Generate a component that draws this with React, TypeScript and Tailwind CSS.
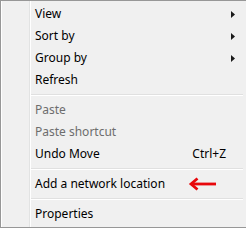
type Item =
  | { kind: 'item'; label: string; submenu?: boolean; disabled?: boolean; shortcut?: string; mark?: boolean }
  | { kind: 'sep' };

const items: Item[] = [
  { kind: 'item', label: 'View', submenu: true },
  { kind: 'item', label: 'Sort by', submenu: true },
  { kind: 'item', label: 'Group by', submenu: true },
  { kind: 'item', label: 'Refresh' },
  { kind: 'sep' },
  { kind: 'item', label: 'Paste', disabled: true },
  { kind: 'item', label: 'Paste shortcut', disabled: true },
  { kind: 'item', label: 'Undo Move', shortcut: 'Ctrl+Z' },
  { kind: 'sep' },
  { kind: 'item', label: 'Add a network location', mark: true },
  { kind: 'sep' },
  { kind: 'item', label: 'Properties' },
];

// red annotation arrow pointing at the item
function RedArrow() {
  return (
    <svg width="30" height="14" viewBox="0 0 30 14" className="absolute left-[157px] top-[4px]">
      <path d="M28 7H4" stroke="#e8070b" strokeWidth="2.8" />
      <path d="M9.5 1.5L3 7L9.5 12.5" stroke="#e8070b" strokeWidth="2.8" fill="none" />
    </svg>
  );
}

export default function App() {
  return (
    <div
      className="w-[246px] h-[228px] bg-[#f0f0f0] border-t border-b border-l border-[#979797] flex text-[12px] text-black overflow-hidden"
      style={{ fontFamily: '"Noto Sans", "Open Sans", sans-serif' }}
    >
      <div className="w-[29px] shrink-0 border-l border-white border-r border-r-[#e2e3e3]" />
      <div className="flex-1 flex flex-col pt-[2px] border-l border-white">
        {items.map((it, i) =>
          it.kind === 'sep' ? (
            <div key={i} className="h-[8px] flex flex-col justify-center mr-[3px]">
              <div className="h-px bg-[#e0e0e0]" />
              <div className="h-px bg-white" />
            </div>
          ) : (
            <div key={i} className="relative h-[22px] flex items-center pl-[4px] pr-[11px]">
              <span className={it.disabled ? 'text-[#6d6d6d]' : ''}>{it.label}</span>
              <span className="flex-1" />
              {it.shortcut && <span className="mr-[9px]">{it.shortcut}</span>}
              {it.submenu && (
                <svg width="4" height="7" viewBox="0 0 4 7">
                  <path d="M0 0L4 3.5L0 7Z" fill="#1a1a1a" />
                </svg>
              )}
              {it.mark && <RedArrow />}
            </div>
          )
        )}
      </div>
    </div>
  );
}
